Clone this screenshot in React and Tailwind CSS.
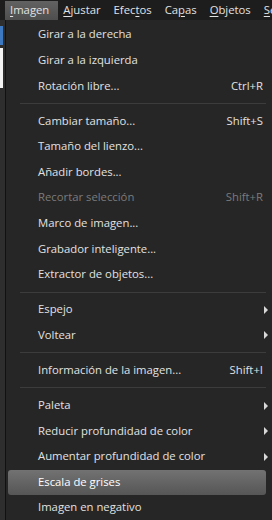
import React from "react";

const items = [
  { label: "Girar a la derecha" },
  { label: "Girar a la izquierda" },
  { label: "Rotación libre...", key: "Ctrl+R" },
  { sep: true },
  { label: "Cambiar tamaño...", key: "Shift+S" },
  { label: "Tamaño del lienzo..." },
  { label: "Añadir bordes..." },
  { label: "Recortar selección", key: "Shift+R", disabled: true },
  { label: "Marco de imagen..." },
  { label: "Grabador inteligente..." },
  { label: "Extractor de objetos..." },
  { sep: true },
  { label: "Espejo", sub: true },
  { label: "Voltear", sub: true },
  { sep: true },
  { label: "Información de la imagen...", key: "Shift+I" },
  { sep: true },
  { label: "Paleta", sub: true },
  { label: "Reducir profundidad de color", sub: true },
  { label: "Aumentar profundidad de color", sub: true },
  { label: "Escala de grises", active: true },
  { label: "Imagen en negativo" },
];

const menus = [
  { name: "Imagen", u: 0 },
  { name: "Ajustar", u: 0 },
  { name: "Efectos", u: 4 },
  { name: "Capas", u: 2 },
  { name: "Objetos", u: 0 },
  { name: "Selecciones", u: 0 },
];

function Underlined({ text, u }) {
  return (
    <>
      {text.slice(0, u)}
      <span className="underline underline-offset-2">{text[u]}</span>
      {text.slice(u + 1)}
    </>
  );
}

export default function App() {
  return (
    <div
      className="w-[272px] h-[520px] overflow-hidden bg-[#262626] text-[11.3px] text-[#e2e2e2] flex flex-col"
      style={{ fontFamily: '"Open Sans", "Noto Sans", sans-serif' }}
    >
      {/* barra de menús */}
      <div className="h-[20px] shrink-0 bg-[#1d1d1d] flex items-center whitespace-nowrap overflow-hidden">
        {menus.map((m, i) => (
          <div
            key={m.name}
            className={
              i === 0
                ? "shrink-0 ml-[5px] h-[19px] pl-[5px] pr-[9px] flex items-center bg-gradient-to-b from-[#626262] to-[#4e4e4e]"
                : "shrink-0 h-[19px] pl-[5px] pr-[8px] flex items-center"
            }
          >
            <Underlined text={m.name} u={m.u} />
          </div>
        ))}
      </div>

      <div className="flex flex-1 min-h-0">
        {/* borde de la barra de herramientas */}
        <div className="w-[5px] shrink-0 bg-[#2e2e2e] flex flex-col pt-[6px] gap-[3px]">
          <div className="w-[3px] h-[19px] bg-[#3d78c2]" />
          <div className="w-[3px] h-[40px] bg-[#f4f4f4]" />
        </div>
        <div className="w-px shrink-0 bg-[#111]" />

        {/* menú desplegable */}
        <div className="flex-1 pt-[2px] pl-[2px] pr-[6px]">
          {items.map((it, i) =>
            it.sep ? (
              <div key={i} className="h-[9.5px] flex items-center pl-[12px]">
                <div className="h-px w-full bg-[#3c3c3c]" />
              </div>
            ) : (
              <div
                key={i}
                className={
                  "h-[25.6px] flex items-center pl-[30px] pr-[3px] rounded-[3px] whitespace-nowrap " +
                  (it.active ? "bg-gradient-to-b from-[#727272] to-[#565656] text-white" : "") +
                  (it.disabled ? " text-[#7b7b7b]" : "")
                }
              >
                <span className="flex-1">{it.label}</span>
                {it.key && <span>{it.key}</span>}
                {it.sub && (
                  <span className="w-0 h-0 -mr-[5px] border-y-[4px] border-y-transparent border-l-[4px] border-l-[#d8d8d8]" />
                )}
              </div>
            )
          )}
        </div>
      </div>
    </div>
  );
}
